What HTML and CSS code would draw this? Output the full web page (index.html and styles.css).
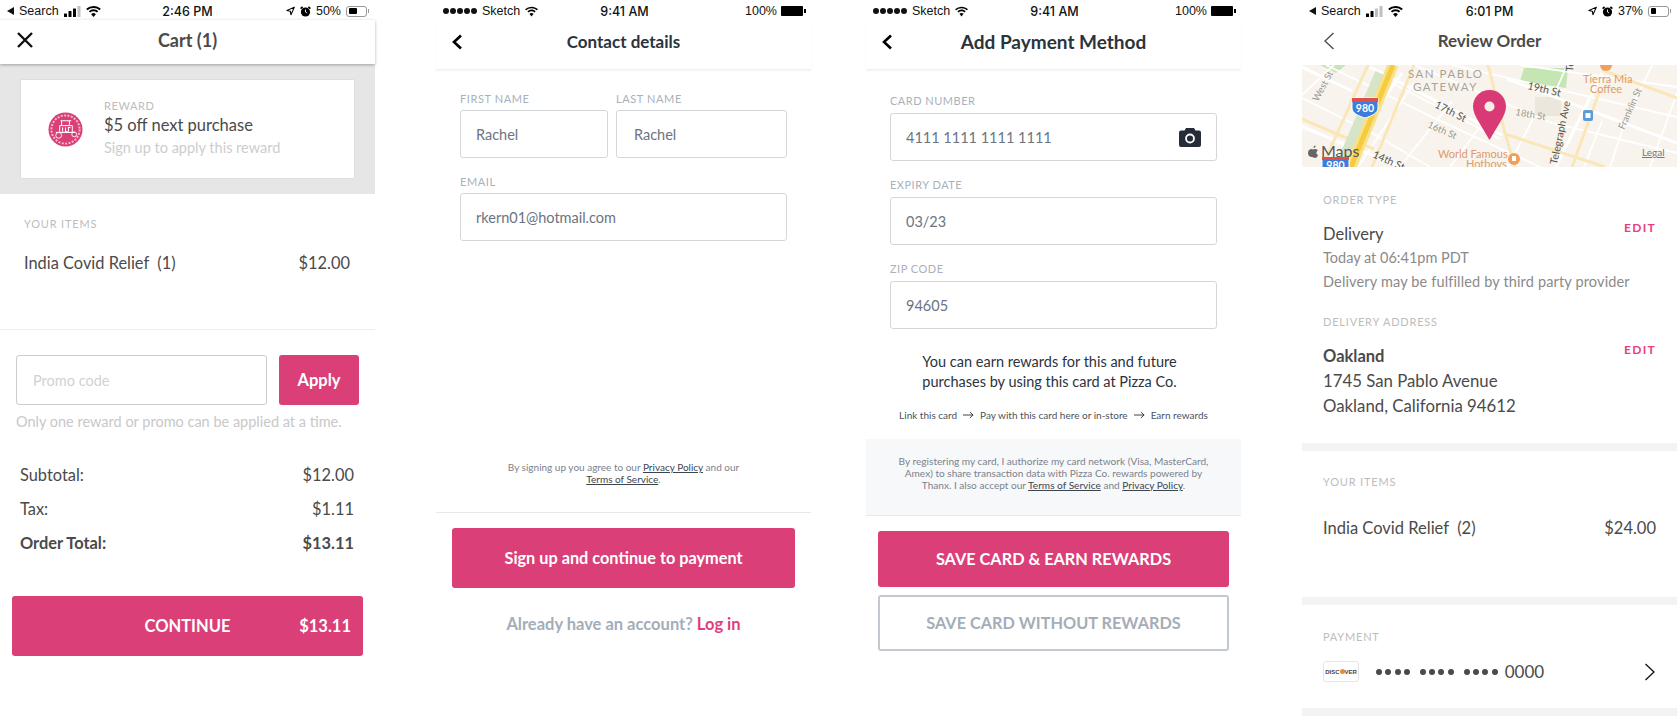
FILE: index.html
```html
<!DOCTYPE html>
<html lang="en">
<head>
  <meta charset="UTF-8">
  <meta name="viewport" content="width=device-width, initial-scale=1.0">
  <title>Checkout screens</title>
  <link rel="stylesheet" href="styles.css">
</head>
<body>

  <svg class="sprite">
    <symbol id="i-signal" viewBox="0 0 17 11">
      <rect x="0" y="7.5" width="3" height="3.5" rx=".5"/>
      <rect x="4.5" y="5" width="3" height="6" rx=".5"/>
      <rect x="9" y="2.5" width="3" height="8.5" rx=".5"/>
      <rect x="13.5" y="0" width="3" height="11" rx=".5" opacity=".25"/>
    </symbol>
    <symbol id="i-signal-low" viewBox="0 0 17 11">
      <rect x="0" y="7.5" width="3" height="3.5" rx=".5"/>
      <rect x="4.5" y="5" width="3" height="6" rx=".5"/>
      <rect x="9" y="2.5" width="3" height="8.5" rx=".5" opacity=".25"/>
      <rect x="13.5" y="0" width="3" height="11" rx=".5" opacity=".25"/>
    </symbol>
    <symbol id="i-wifi" viewBox="0 0 16 12">
      <path d="M8 12 5.4 8.9a3.9 3.9 0 0 1 5.2 0z"/>
      <path d="M8 3.6c2 0 3.8.8 5.1 2l-1.4 1.6A5.6 5.6 0 0 0 8 5.8a5.6 5.6 0 0 0-3.7 1.4L2.9 5.6A7.5 7.5 0 0 1 8 3.6z"/>
      <path d="M8 0c3.1 0 5.9 1.2 8 3.1l-1.4 1.5A9.7 9.7 0 0 0 8 2.1a9.7 9.7 0 0 0-6.6 2.5L0 3.1A11.9 11.9 0 0 1 8 0z"/>
    </symbol>
    <symbol id="i-nav" viewBox="0 0 10 10">
      <path d="M9.3.7 1 4.5l3.8.7.7 3.9z" fill="none" stroke="#000" stroke-width="1.2" stroke-linejoin="round"/>
    </symbol>
    <symbol id="i-alarm" viewBox="0 0 11 11">
      <circle cx="5.5" cy="6" r="4.6"/>
      <path d="M.6 2.6 2.6.8M10.4 2.6 8.4.8" stroke="#000" stroke-width="1.6"/>
      <path d="M5.5 3.5V6l1.6 1" stroke="#fff" stroke-width=".9" fill="none"/>
    </symbol>
    <symbol id="i-back" viewBox="0 0 12 16">
      <path d="M10 1.5 3 8l7 6.5" fill="none" stroke="#000" stroke-width="2.6"/>
    </symbol>
  </svg>

  <main class="screens">

    <section class="phone phone-cart">
      <div class="status">
        <div class="status-left">
          <span class="tri"></span><span>Search</span>
          <svg class="sig"><use href="#i-signal"/></svg>
          <svg class="wifi"><use href="#i-wifi"/></svg>
        </div>
        <div class="status-time">2:46 PM</div>
        <div class="status-right">
          <svg class="nav"><use href="#i-nav"/></svg>
          <svg class="alarm"><use href="#i-alarm"/></svg>
          <span>50%</span>
          <span class="batt"><span class="batt-fill w50"></span></span>
        </div>
      </div>
      <header class="topbar cart-bar">
        <svg class="close" viewBox="0 0 18 18"><path d="M2 2l14 14M16 2 2 16" fill="none" stroke="#111" stroke-width="2.4"/></svg>
        <h1 class="title-grey">Cart (1)</h1>
      </header>
      <div class="band">
        <div class="reward">
          <svg class="reward-logo" viewBox="0 0 36 36">
            <circle cx="18" cy="18" r="17.5" fill="#db3f78"/>
            <circle cx="18" cy="18" r="14.5" fill="none" stroke="#f6bcd1" stroke-width="2" stroke-dasharray="2 1.5"/>
            <path d="M13 9h11M14 9v5M22 9v5M12 14h13v7H12zM8 21h20" fill="none" stroke="#fff" stroke-width="1"/>
            <circle cx="11" cy="24" r="3" fill="none" stroke="#fff" stroke-width=".9"/>
            <circle cx="27" cy="23" r="2.5" fill="none" stroke="#fff" stroke-width=".9"/>
            <path d="M15 16v4M18 16v4h2M23 16h-2v4" fill="none" stroke="#fff" stroke-width="1.1"/>
          </svg>
          <div>
            <div class="label reward-label">REWARD</div>
            <div class="reward-name">$5 off next purchase</div>
            <div class="reward-sub">Sign up to apply this reward</div>
          </div>
        </div>
      </div>
      <div class="cart-items">
        <div class="label">YOUR ITEMS</div>
        <div class="line-item"><span>India Covid Relief&nbsp; (1)</span><span>$12.00</span></div>
      </div>
      <div class="promo">
        <div class="promo-row">
          <div class="promo-input">Promo code</div>
          <div class="apply">Apply</div>
        </div>
        <p class="promo-note">Only one reward or promo can be applied at a time.</p>
      </div>
      <div class="totals">
        <div class="total-row"><span>Subtotal:</span><span>$12.00</span></div>
        <div class="total-row"><span>Tax:</span><span>$1.11</span></div>
        <div class="total-row strong"><span>Order Total:</span><span>$13.11</span></div>
      </div>
      <div class="btn continue"><span></span><span>CONTINUE</span><span class="continue-price">$13.11</span></div>
    </section>

    <section class="phone phone-contact">
      <div class="status status-sketch">
        <div class="status-left">
          <span class="dots"><i></i><i></i><i></i><i></i><i></i></span><span>Sketch</span>
          <svg class="wifi"><use href="#i-wifi"/></svg>
        </div>
        <div class="status-time">9:41 AM</div>
        <div class="status-right">
          <span>100%</span>
          <span class="batt-full"></span>
        </div>
      </div>
      <header class="topbar sub-bar">
        <svg class="back"><use href="#i-back"/></svg>
        <h1 class="title-dark">Contact details</h1>
      </header>
      <div class="form contact-form">
        <div class="name-row">
          <div>
            <div class="label field-label">FIRST NAME</div>
            <div class="field">Rachel</div>
          </div>
          <div>
            <div class="label field-label">LAST NAME</div>
            <div class="field field-last">Rachel</div>
          </div>
        </div>
        <div class="label field-label">EMAIL</div>
        <div class="field">rkern01@hotmail.com</div>
      </div>
      <p class="legal contact-legal">By signing up you agree to our <a href="#">Privacy Policy</a> and our<br><a href="#">Terms of Service</a>.</p>
      <div class="rule"></div>
      <div class="btn signup">Sign up and continue to payment</div>
      <p class="login">Already have an account? <a href="#">Log in</a></p>
    </section>

    <section class="phone phone-payment">
      <div class="status status-sketch">
        <div class="status-left">
          <span class="dots"><i></i><i></i><i></i><i></i><i></i></span><span>Sketch</span>
          <svg class="wifi"><use href="#i-wifi"/></svg>
        </div>
        <div class="status-time">9:41 AM</div>
        <div class="status-right">
          <span>100%</span>
          <span class="batt-full"></span>
        </div>
      </div>
      <header class="topbar sub-bar">
        <svg class="back"><use href="#i-back"/></svg>
        <h1 class="title-dark big">Add Payment Method</h1>
      </header>
      <div class="form card-form">
        <div class="label field-label">CARD NUMBER</div>
        <div class="field field-card">
          <span class="card-number">4111 1111 1111 1111</span>
          <svg class="camera" viewBox="0 0 22 19">
            <path d="M7 0h8l1.5 2.5H20a2 2 0 0 1 2 2V17a2 2 0 0 1-2 2H2a2 2 0 0 1-2-2V4.5a2 2 0 0 1 2-2h3.5z" fill="#252e38"/>
            <circle cx="11" cy="10.5" r="4" fill="none" stroke="#fff" stroke-width="1.8"/>
          </svg>
        </div>
        <div class="label field-label">EXPIRY DATE</div>
        <div class="field">03/23</div>
        <div class="label field-label">ZIP CODE</div>
        <div class="field">94605</div>
      </div>
      <p class="earn">You can earn rewards for this and future<br>purchases by using this card at Pizza Co.</p>
      <div class="steps">
        <span>Link this card</span>
        <svg class="arrow" viewBox="0 0 12 8"><path d="M0 4h11M7.5.8 11 4 7.5 7.2" fill="none" stroke="#2b333d" stroke-width="1"/></svg>
        <span>Pay with this card here or in-store</span>
        <svg class="arrow" viewBox="0 0 12 8"><path d="M0 4h11M7.5.8 11 4 7.5 7.2" fill="none" stroke="#2b333d" stroke-width="1"/></svg>
        <span>Earn rewards</span>
      </div>
      <div class="consent">
        <p class="legal">By registering my card, I authorize my card network (Visa, MasterCard,<br>Amex) to share transaction data with Pizza Co. rewards powered by<br>Thanx. I also accept our <a href="#">Terms of Service</a> and <a href="#">Privacy Policy</a>.</p>
      </div>
      <div class="btn save">SAVE CARD &amp; EARN REWARDS</div>
      <div class="btn save-plain">SAVE CARD WITHOUT REWARDS</div>
    </section>

    <section class="phone phone-review">
      <div class="status">
        <div class="status-left">
          <span class="tri"></span><span>Search</span>
          <svg class="sig"><use href="#i-signal-low"/></svg>
          <svg class="wifi"><use href="#i-wifi"/></svg>
        </div>
        <div class="status-time">6:01 PM</div>
        <div class="status-right">
          <svg class="nav"><use href="#i-nav"/></svg>
          <svg class="alarm"><use href="#i-alarm"/></svg>
          <span>37%</span>
          <span class="batt"><span class="batt-fill w37"></span></span>
        </div>
      </div>
      <header class="topbar review-bar">
        <svg class="back-thin" viewBox="0 0 12 18"><path d="M10.5 1 2 9l8.5 8" fill="none" stroke="#4a4a4a" stroke-width="1.3"/></svg>
        <h1 class="title-grey">Review Order</h1>
      </header>

      <svg class="map" viewBox="0 0 375 102">
        <rect width="375" height="102" fill="#f8f4ed"/>
        <path d="M18 0h26L34 8z" fill="#c9e4b6"/>
        <path d="M222 3h44l-2 20-46-7z" fill="#c5e5b3"/>
        <rect x="233" y="32" width="26" height="19" fill="#ebe7dc"/>

        <!-- small streets -->
        <g fill="none" stroke="#fff" stroke-width="1.8">
          <path d="M0 33 70 68 128 102M0 60 60 90M24 0 130 52 238 102M78 12 198 74M112 0 250 58 375 88M150 0 375 52M218 0 375 22"/>
          <path d="M32 0 0 30M112 18 56 102M150 36 98 102M178 62 148 102M232 52 206 102M265 0 252 30M350 0 322 60 308 102M375 28 348 102M300 56 282 102"/>
        </g>
        <!-- main white streets -->
        <g fill="none" stroke="#fff" stroke-width="3">
          <path d="M68 2 200 70M205 14 375 78M0 2 50 26M0 62 100 102"/>
          <path d="M100 8 35 102M300 8 254 102"/>
        </g>
        <!-- pale arterials -->
        <g fill="none" stroke="#fae7b9" stroke-width="3">
          <path d="M186 0l17 68 10 34"/>
          <path d="M0 54l42 18 30 12M203 69l100 33"/>
          <path d="M298 25l-28 77"/>
          <path d="M300 5l75 28"/>
          <path d="M66 0 20 102"/>
          <path d="M112 0 70 102"/>
        </g>
        <path d="M78 8 38 102" fill="none" stroke="#d6e5c8" stroke-width="10"/>
        <path d="M91 0 49 102" fill="none" stroke="#f9e08a" stroke-width="11"/>
        <path d="M91 0 49 102" fill="none" stroke="#f6cc3f" stroke-width="5"/>

        <g font-family="Lato, sans-serif">
          <text x="106" y="13" class="map-area">SAN PABLO</text>
          <text x="111" y="26" class="map-area">GATEWAY</text>
          <text class="map-street dark" transform="translate(225 24) rotate(13)">19th St</text>
          <text class="map-street dark" transform="translate(132 42) rotate(27)">17th St</text>
          <text class="map-street" transform="translate(213 50) rotate(10)">18th St</text>
          <text class="map-street" transform="translate(125 62) rotate(24)">16th St</text>
          <text class="map-street dark" transform="translate(70 92) rotate(24)">14th St</text>
          <text class="map-street" transform="translate(16 37) rotate(-62)">West St</text>
          <text class="map-street dark" transform="translate(255 100) rotate(-78)">Telegraph Ave</text>
          <text class="map-street" transform="translate(322 65) rotate(-66)">Franklin St</text>
          <text class="map-street dark" transform="translate(271 7) rotate(-85)">Te</text>
          <text x="281" y="18" class="map-poi">Tierra Mia</text>
          <text x="288" y="28" class="map-poi">Coffee</text>
          <text x="136" y="93" class="map-poi">World Famous</text>
          <text x="164" y="103" class="map-poi">Hotboys</text>
          <text x="19" y="92" class="map-maps">Maps</text>
          <text x="340" y="91" class="map-legal">Legal</text>
        </g>
        <path d="M10 92c-3 0-4-2-4-4 0-3 2-4 3.5-4 .8 0 1.200.4 1.800.4s1-.4 1.900-.4c1.200 0 2.100.6 2.600 1.400-2 1.300-1.600 3.800.3 4.600-.5 1.200-1.400 2.900-2.700 2.900-.8 0-1.200-.5-2-.5zM11.500 83c0-1.300.9-2.300 2.200-2.500 0 1.300-.9 2.400-2.200 2.500z" fill="#666"/>

        <circle cx="304" cy="0" r="6" fill="#f0a05a"/>
        <rect x="281" y="45" width="10" height="11" rx="2" fill="#5b9bd8"/>
        <rect x="283.5" y="48" width="5" height="5" fill="#fff"/>
        <circle cx="212" cy="94" r="6" fill="#f0a05a"/>
        <rect x="210" y="91" width="4" height="5" fill="#fff"/>

        <path d="M50 33h26v10c0 5-6 8-13 10-7-2-13-5-13-10z" fill="#3d7ddb" stroke="#fff" stroke-width="1"/>
        <rect x="50" y="33" width="26" height="4" fill="#e0504a"/>
        <text x="63" y="47" class="map-shield">980</text>
        <path d="M20 93h27v10H20z" fill="#3d7ddb" stroke="#fff" stroke-width="1"/>
        <rect x="20" y="92" width="27" height="3" fill="#e0504a"/>
        <text x="33.5" y="104" class="map-shield">980</text>

        <path d="M187.5 25c-9.2 0-16.5 7.3-16.5 16.5 0 4.5 2 8.5 4 12.5l12.5 21L200 54c2-4 4-8 4-12.5C204 32.3 196.7 25 187.5 25z" fill="#d93a75"/>
        <circle cx="187.5" cy="41.5" r="5" fill="#f5efe3"/>
      </svg>

      <div class="review-details">
        <div class="label">ORDER TYPE</div>
        <div class="detail">
          <div class="detail-text">
            <div class="detail-head">Delivery</div>
            <div class="detail-sub first">Today at 06:41pm PDT</div>
            <div class="detail-sub second">Delivery may be fulfilled by third party provider</div>
          </div>
          <a class="edit" href="#">EDIT</a>
        </div>
        <div class="label addr-label">DELIVERY ADDRESS</div>
        <div class="detail">
          <div class="detail-text">
            <div class="detail-head strong">Oakland</div>
            <div class="detail-addr first">1745 San Pablo Avenue</div>
            <div class="detail-addr">Oakland, California 94612</div>
          </div>
          <a class="edit" href="#">EDIT</a>
        </div>
      </div>
      <div class="gap-bar"></div>
      <div class="review-items">
        <div class="label">YOUR ITEMS</div>
        <div class="line-item"><span>India Covid Relief&nbsp; (2)</span><span>$24.00</span></div>
      </div>
      <div class="gap-bar"></div>
      <div class="review-pay">
        <div class="label">PAYMENT</div>
        <div class="pay-row">
          <span class="discover">DISC<b></b>VER</span>
          <span class="card-dots"><i></i><i></i><i></i><i></i></span>
          <span class="card-dots"><i></i><i></i><i></i><i></i></span>
          <span class="card-dots"><i></i><i></i><i></i><i></i></span>
          <span class="card-last">0000</span>
          <svg class="next" viewBox="0 0 12 18"><path d="M1.5 1 10 9l-8.5 8" fill="none" stroke="#111" stroke-width="1.3"/></svg>
        </div>
      </div>
      <div class="gap-bar"></div>
    </section>

  </main>

</body>
</html>
```

FILE: styles.css
```css
* {
  box-sizing: border-box;
}
html, body {
  margin: 0;
  height: 716px;
  overflow: hidden;
  background: #fff;
}
body {
  font-family: Lato, "Open Sans", sans-serif;
  color: #4a4a4a;
}
p, h1 {
  margin: 0;
}
.sprite {
  display: none;
}
.screens {
  display: flex;
}
.phone {
  width: 375px;
  height: 716px;
  flex: none;
}
.phone-contact { margin-left: 61px; }
.phone-payment { margin-left: 55px; }
.phone-review { margin-left: 61px; }

/* status bar */
.status {
  display: grid;
  grid-template-columns: 1fr auto 1fr;
  align-items: center;
  height: 20px;
  padding: 2px 7px 0;
  font-family: "Liberation Sans", sans-serif;
  font-size: 12.5px;
  color: #111;
}
.status-left, .status-right {
  display: flex;
  align-items: center;
  gap: 5px;
}
.status-right {
  justify-content: flex-end;
}
.status-time {
  font-family: Inter, sans-serif;
  font-weight: 500;
  font-size: 12.5px;
}
.tri {
  width: 0;
  height: 0;
  border-top: 4px solid transparent;
  border-bottom: 4px solid transparent;
  border-right: 7px solid #111;
}
.sig { width: 17px; height: 11px; }
.wifi { width: 15px; height: 11px; }
.nav { width: 9px; height: 10px; }
.alarm { width: 11px; height: 11px; }
.batt {
  position: relative;
  display: block;
  width: 21px;
  height: 11px;
  margin-right: 1px;
  padding: 1.5px;
  border: 1px solid #999;
  border-radius: 3px;
}
.batt::after {
  content: "";
  position: absolute;
  right: -3px;
  top: 2.5px;
  width: 1.5px;
  height: 4px;
  background: #999;
}
.batt-fill {
  display: block;
  height: 100%;
  background: #000;
  border-radius: 1px;
}
.w50 { width: 50%; }
.w37 { width: 37%; }
.dots {
  display: flex;
  gap: 1px;
}
.dots i {
  width: 6px;
  height: 6px;
  border-radius: 50%;
  background: #111;
}
.status-sketch {
  padding-right: 5px;
}
.status-sketch .status-right {
  gap: 4px;
}
.status-sketch .wifi {
  width: 13px;
}
.batt-full {
  position: relative;
  display: block;
  width: 22px;
  height: 10px;
  margin-right: 3px;
  background: #000;
  border-radius: 1px;
}
.batt-full::after {
  content: "";
  position: absolute;
  right: -3px;
  top: 3px;
  width: 2px;
  height: 4px;
  background: #000;
}

/* top bars */
.topbar {
  display: flex;
  align-items: center;
  justify-content: center;
  position: relative;
}
.topbar h1 {
  font-size: 17px;
  font-weight: 700;
}
.title-grey { color: #4a4a4a; }
.title-dark { color: #2b333d; }
.topbar .big { font-size: 19px; }
.cart-bar {
  height: 44px;
  padding-bottom: 4px;
  box-shadow: 0 1px 3px rgba(0, 0, 0, 0.3);
}
.cart-bar h1 {
  font-size: 18px;
}
.close {
  position: absolute;
  left: 16px;
  top: 11px;
  width: 18px;
  height: 18px;
}
.sub-bar {
  height: 50px;
  padding-bottom: 6px;
  border-bottom: 1px solid #eef0f1;
  box-shadow: 0 1px 2px rgba(0, 0, 0, 0.05);
}
.back {
  position: absolute;
  left: 15px;
  top: 14px;
  width: 12px;
  height: 16px;
}
.review-bar {
  height: 45px;
  padding-bottom: 5px;
}
.back-thin {
  position: absolute;
  left: 21px;
  top: 12px;
  width: 12px;
  height: 18px;
}

.label {
  font-size: 11px;
  line-height: 14px;
  letter-spacing: 0.8px;
  color: #bdbdbd;
}
.reward-label {
  letter-spacing: 0.6px;
}

/* cart */
.band {
  height: 130px;
  padding: 16px 21px;
  background: #e6e6e6;
}
.reward {
  display: flex;
  align-items: center;
  gap: 21px;
  height: 98px;
  padding-left: 27px;
  background: #fff;
  box-shadow: 0 0 1px rgba(0, 0, 0, 0.2);
}
.reward-logo {
  width: 35px;
  height: 35px;
}
.reward-name {
  font-size: 16.5px;
  line-height: 24px;
}
.reward-sub {
  font-size: 14.5px;
  line-height: 22px;
  color: #cdcdcd;
}
.cart-items {
  height: 136px;
  padding: 23px 25px 0 24px;
  border-bottom: 1px solid #eee;
}
.line-item {
  display: flex;
  justify-content: space-between;
  font-size: 16.4px;
  line-height: 22px;
  margin-top: 21px;
}
.promo {
  padding: 25px 16px 0;
}
.promo-row {
  display: flex;
  gap: 12px;
}
.promo-input {
  width: 251px;
  height: 50px;
  padding-left: 16px;
  border: 1px solid #ccc;
  border-radius: 3px;
  font-size: 14.5px;
  line-height: 50px;
  color: #d2d2d2;
}
.apply {
  width: 80px;
  height: 50px;
  background: #db3f78;
  border-radius: 3px;
  color: #fff;
  font-size: 16.5px;
  font-weight: 700;
  line-height: 51px;
  text-align: center;
}
.promo-note {
  margin-top: 7px;
  font-size: 14.5px;
  line-height: 20px;
  color: #c8c8c8;
  white-space: nowrap;
}
.totals {
  margin-top: 26px;
  padding: 0 21px 0 20px;
}
.total-row {
  display: flex;
  justify-content: space-between;
  font-size: 16.4px;
  line-height: 34px;
}
.total-row.strong {
  font-weight: 700;
}
.btn {
  background: #db3f78;
  border-radius: 3px;
  color: #fff;
  font-size: 16.3px;
  font-weight: 700;
  text-align: center;
}
.continue {
  display: grid;
  grid-template-columns: 1fr auto 1fr;
  align-items: center;
  height: 60px;
  margin: 36px 12px 0;
  font-size: 16.5px;
}
.continue-price {
  justify-self: end;
  padding-right: 12px;
}

/* forms */
.form {
  padding: 0 24px;
}
.field-label {
  margin-bottom: 4px;
  letter-spacing: 0.6px;
  color: #a9b1bb;
}
.field {
  height: 48px;
  margin-bottom: 17px;
  padding: 0 15px;
  border: 1px solid #d3d7dc;
  border-radius: 3px;
  font-size: 14.5px;
  line-height: 48px;
  color: #6b7480;
}
.field-last {
  padding-left: 17px;
}
.contact-form {
  padding-top: 22px;
}
.name-row {
  display: grid;
  grid-template-columns: 148px 1fr;
  gap: 8px;
}
.legal {
  font-size: 10px;
  line-height: 12px;
  text-align: center;
  color: #7a828c;
}
.legal a {
  color: #3b444f;
}
.contact-legal {
  margin-top: 220px;
}
.rule {
  height: 1px;
  margin-top: 27px;
  background: #e6e8ea;
}
.signup {
  height: 60px;
  margin: 15px 16px 0;
  line-height: 60px;
}
.login {
  margin-top: 24px;
  font-size: 16.5px;
  font-weight: 700;
  line-height: 24px;
  text-align: center;
  color: #a5adb8;
}
.login a {
  color: #e0407a;
  text-decoration: none;
}

/* payment */
.card-form {
  padding-top: 24px;
}
.card-form .field-label {
  margin-bottom: 5px;
  letter-spacing: 0.5px;
}
.field-card {
  display: flex;
  align-items: center;
  justify-content: space-between;
}
.card-number {
  margin-top: 2px;
}
.camera {
  width: 22px;
  height: 19px;
}
.earn {
  margin-top: 23px;
  padding-right: 8px;
  font-size: 14.5px;
  line-height: 20px;
  text-align: center;
  color: #2b333d;
}
.steps {
  display: flex;
  align-items: center;
  justify-content: center;
  gap: 6px;
  margin-top: 16px;
  font-size: 10px;
  line-height: 14px;
  color: #4a525c;
}
.arrow {
  width: 11px;
  height: 8px;
}
.consent {
  height: 77px;
  margin-top: 17px;
  padding-top: 16px;
  background: #f7f8fa;
  border-bottom: 1px solid #e6e8ea;
}
.consent .legal {
  font-size: 10.1px;
}
.save {
  height: 56px;
  margin: 15px 12px 0;
  line-height: 56px;
}
.save-plain {
  height: 56px;
  margin: 8px 12px 0;
  background: #fff;
  border: 2px solid #c3c9d1;
  line-height: 52px;
  color: #a5adb8;
}

/* review */
.map {
  display: block;
  width: 375px;
  height: 102px;
}
.map-area {
  font-size: 11.5px;
  letter-spacing: 1.5px;
  fill: #a8a498;
}
.map-street {
  font-size: 9.5px;
  fill: #9a968e;
}
.map-street.dark {
  font-size: 10.5px;
  fill: #55524c;
}
.map-poi {
  font-size: 11px;
  fill: #e09a68;
}
.map-maps {
  font-size: 16px;
  fill: #555;
}
.map-legal {
  font-size: 10px;
  fill: #777;
  text-decoration: underline;
}
.map-shield {
  font-size: 10.5px;
  font-weight: 700;
  text-anchor: middle;
  fill: #fff;
}
.review-details {
  height: 276px;
  padding: 26px 21px 0 21px;
}
.detail {
  display: flex;
  justify-content: space-between;
  align-items: flex-start;
  margin-top: 15px;
}
.detail-text {
  flex: 1;
  min-width: 0;
  white-space: nowrap;
}
.detail-head {
  font-size: 16.5px;
  line-height: 24px;
}
.detail-head.strong {
  font-weight: 700;
}
.detail-sub {
  font-size: 14.5px;
  line-height: 22px;
  color: #8a8a8a;
}
.detail-sub.second {
  margin-top: 2px;
  letter-spacing: 0.15px;
}
.detail-addr {
  font-size: 16.8px;
  line-height: 24px;
}
.detail-addr + .detail-addr {
  margin-top: 1px;
}
.first {
  margin-top: 1px;
}
.edit {
  margin-top: -1px;
  font-size: 12px;
  font-weight: 700;
  line-height: 14px;
  letter-spacing: 1.3px;
  color: #e8407f;
  text-decoration: none;
}
.addr-label {
  margin-top: 22px;
}
.gap-bar {
  height: 8px;
  background: #f2f4f4;
}
.review-items {
  height: 146px;
  padding: 24px 21px 0 21px;
}
.review-items .line-item {
  margin-top: 27px;
  font-size: 16.5px;
  line-height: 24px;
}
.review-pay {
  height: 103px;
  padding: 25px 21px 0 21px;
}
.pay-row {
  display: flex;
  align-items: center;
  margin-top: 17px;
}
.discover {
  display: flex;
  align-items: center;
  justify-content: center;
  width: 36px;
  height: 21px;
  margin-right: 17px;
  border: 1px solid #e6e6e6;
  border-radius: 3px;
  font-family: "Liberation Sans", sans-serif;
  font-size: 6px;
  font-weight: 700;
  color: #444;
}
.discover b {
  width: 5px;
  height: 5px;
  border-radius: 50%;
  background: #f08a2e;
}
.card-dots {
  display: flex;
  gap: 3.3px;
  margin-right: 10px;
}
.card-dots i {
  width: 6px;
  height: 6px;
  border-radius: 50%;
  background: #4a4a4a;
}
.card-last {
  margin-left: -3px;
  font-size: 17px;
  line-height: 21px;
}
.next {
  width: 12px;
  height: 18px;
  margin-left: auto;
}
```
